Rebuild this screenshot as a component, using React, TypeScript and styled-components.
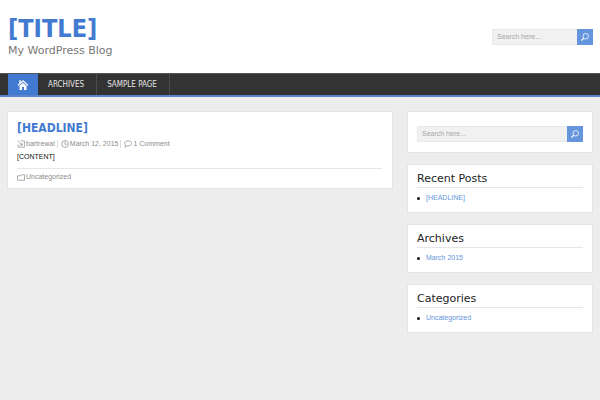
import React from "react";
import styled, { createGlobalStyle, css } from "styled-components";

const GlobalStyle = createGlobalStyle`
  * { box-sizing: border-box; }
  body {
    margin: 0;
    background: #ededed;
    color: #111;
    font: 7px/12px "Liberation Sans", Arial, sans-serif;
  }
  h1, h2, p, ul { margin: 0; padding: 0; font-weight: normal; }
  a { color: inherit; text-decoration: none; }
`;

const Header = styled.header`
  display: flex;
  align-items: center;
  justify-content: space-between;
  height: 73px;
  padding: 0 7px 0 8px;
  background: #fff;
`;

const Brand = styled.div`
  display: flex;
  flex-direction: column;
`;

const SiteTitle = styled.h1`
  && { font-weight: bold; }
  color: #437ad1;
  font-family: "DejaVu Sans Condensed", "DejaVu Sans", sans-serif;
  font-stretch: condensed;
  font-size: 25px;
  line-height: 28px;
`;

const Tagline = styled.p`
  color: #777;
  font-family: "DejaVu Sans", sans-serif;
  font-size: 11px;
  line-height: 16px;
`;

const SearchForm = styled.form<{ $compact?: boolean }>`
  display: flex;
  height: 16px;
  ${(p) => p.$compact && css`width: 101px;`}
`;

const SearchInput = styled.input`
  flex: 1;
  min-width: 0;
  border: 1px solid #e9e9e9;
  border-right: 0;
  border-radius: 0;
  padding: 0 4px;
  background: #f1f1f1;
  color: #555;
  font: inherit;
  outline: 0;
  &::placeholder { color: #a6a6a6; opacity: 1; }
`;

const SearchButton = styled.button`
  display: flex;
  align-items: center;
  justify-content: center;
  width: 16px;
  border: 0;
  padding: 0;
  background: #6495dd;
  color: #fff;
  cursor: pointer;
`;

const Nav = styled.nav`
  display: flex;
  height: 24px;
  padding: 0 8px;
  border-top: 1px solid #555;
  border-bottom: 2px solid #5a82c4;
  background: #333;
`;

const NavLink = styled.a<{ $home?: boolean }>`
  display: flex;
  align-items: center;
  padding: 0 12px 0 10px;
  border-right: 1px solid #4c4c4c;
  color: #e6e6e6;
  font-family: "DejaVu Sans Condensed", "DejaVu Sans", sans-serif;
  font-stretch: condensed;
  font-size: 8px;
  ${(p) => p.$home && css`
    justify-content: center;
    width: 30px;
    padding: 0;
    border: 0;
    background: #437ad1;
    color: #fff;
  `}
`;

const Content = styled.div`
  display: grid;
  grid-template-columns: minmax(0, 386fr) minmax(0, 186fr);
  gap: 14px;
  align-items: start;
  padding: 14px 7px;
`;

const Card = styled.section`
  border: 1px solid #e4e4e4;
  padding: 9px;
  background: #fff;
`;

const PostCard = styled(Card).attrs({ as: "article" })`
  padding: 8px 10px 4px 9px;
`;

const PostTitle = styled.h2`
  && { font-weight: bold; }
  color: #437ad1;
  font-family: "DejaVu Sans Condensed", "DejaVu Sans", sans-serif;
  font-stretch: condensed;
  font-size: 12px;
  line-height: 17px;
`;

const Meta = styled.div`
  display: flex;
  height: 14px;
  align-items: center;
  color: #8c8c8c;
`;

const MetaItem = styled.span`
  display: flex;
  align-items: center;
  gap: 1px;
  line-height: 8px;
  & + & {
    margin-left: 2px;
    padding-left: 3px;
    border-left: 1px solid #ddd;
  }
`;

const PostFooter = styled.footer`
  margin-top: 5px;
  padding-top: 1px;
  border-top: 1px solid #e6e6e6;
`;

const Sidebar = styled.aside`
  display: flex;
  flex-direction: column;
  gap: 11px;
`;

const SearchCard = styled(Card)`
  padding: 14px 9px 10px;
`;

const Widget = styled(Card)`
  padding: 5px 9px 8px;
`;

const WidgetTitle = styled.h2`
  border-bottom: 1px solid #e6e6e6;
  color: #222;
  font-family: "DejaVu Sans", sans-serif;
  font-size: 11px;
  line-height: 17px;
`;

const WidgetList = styled.ul`
  padding-top: 4px;
  list-style: none;
`;

const WidgetItem = styled.li`
  display: flex;
  align-items: center;
  gap: 6px;
  color: #6495dd;
  &::before {
    content: "";
    width: 3px;
    height: 3px;
    border-radius: 50%;
    background: #111;
  }
`;

const Icon = styled.svg`
  display: block;
  flex: none;
  fill: none;
  stroke: currentColor;
`;

const SearchIcon = () => (
  <Icon width="8" height="8" viewBox="0 0 16 16" strokeWidth="1.6" aria-hidden="true">
    <circle cx="9.5" cy="6.5" r="5.5" />
    <path d="M5.6 10.4 1 15" strokeWidth="2.2" />
  </Icon>
);

const HomeIcon = () => (
  <Icon width="12" height="12" viewBox="0 0 24 24" aria-hidden="true">
    <path d="M2 13 12 3.5 22 13" strokeWidth="2.4" />
    <path d="M4.5 2.5h3v4l-3 3z" fill="currentColor" stroke="none" />
    <path d="M12 7.5 5 14v8h5v-6h4v6h5v-8z" fill="currentColor" stroke="none" />
  </Icon>
);

const AuthorIcon = () => (
  <Icon width="8" height="8" viewBox="0 0 14 14" strokeWidth="1.2" aria-hidden="true">
    <path d="M6 1.5h7v11H2V8M1 1l8 8M9 4.5V9H4.5" />
  </Icon>
);

const ClockIcon = () => (
  <Icon width="8" height="8" viewBox="0 0 14 14" strokeWidth="1.3" aria-hidden="true">
    <circle cx="7" cy="7" r="6" />
    <path d="M7 3v4.5h3.5" />
  </Icon>
);

const CommentIcon = () => (
  <Icon width="8" height="8" viewBox="0 0 14 14" strokeWidth="1.3" aria-hidden="true">
    <path d="M7.2 1.5c3.4 0 6 1.8 6 4.4s-2.6 4.4-6 4.4c-.7 0-1.4-.1-2-.2L2 13l.7-3.9C1.7 8.3 1 7.2 1 5.9c0-2.600 2.800-4.400 6.200-4.400z" />
  </Icon>
);

const FolderIcon = () => (
  <Icon width="8" height="7" viewBox="0 0 16 14" strokeWidth="1.4" aria-hidden="true">
    <path d="M1 12.500v-9h7l1.500-2H15v11z" />
  </Icon>
);

const Search = ({ id, compact }: { id: string; compact?: boolean }) => (
  <SearchForm $compact={compact} role="search" onSubmit={(e) => e.preventDefault()}>
    <SearchInput id={id} type="text" aria-label="Search" placeholder="Search here..." />
    <SearchButton type="submit" aria-label="Submit search">
      <SearchIcon />
    </SearchButton>
  </SearchForm>
);

const widgets = [
  { title: "Recent Posts", link: "[HEADLINE]" },
  { title: "Archives", link: "March 2015" },
  { title: "Categories", link: "Uncategorized" },
];

export default function App() {
  return (
    <>
      <GlobalStyle />
      <Header>
        <Brand>
          <SiteTitle><a href="#home">[TITLE]</a></SiteTitle>
          <Tagline>My WordPress Blog</Tagline>
        </Brand>
        <Search id="header-search" compact />
      </Header>
      <Nav>
        <NavLink $home href="#home" aria-label="Home"><HomeIcon /></NavLink>
        <NavLink href="#archives">ARCHIVES</NavLink>
        <NavLink href="#sample">SAMPLE PAGE</NavLink>
      </Nav>
      <Content>
        <PostCard>
          <PostTitle><a href="#post">[HEADLINE]</a></PostTitle>
          <Meta>
            <MetaItem><AuthorIcon /><a href="#author">bartrewal</a></MetaItem>
            <MetaItem><ClockIcon /><a href="#date">March 12, 2015</a></MetaItem>
            <MetaItem><CommentIcon /><a href="#comments">1 Comment</a></MetaItem>
          </Meta>
          <p>[CONTENT]</p>
          <PostFooter>
            <Meta>
              <MetaItem><FolderIcon /><a href="#category">Uncategorized</a></MetaItem>
            </Meta>
          </PostFooter>
        </PostCard>
        <Sidebar>
          <SearchCard><Search id="sidebar-search" /></SearchCard>
          {widgets.map((w) => (
            <Widget key={w.title}>
              <WidgetTitle>{w.title}</WidgetTitle>
              <WidgetList>
                <WidgetItem><a href="#item">{w.link}</a></WidgetItem>
              </WidgetList>
            </Widget>
          ))}
        </Sidebar>
      </Content>
    </>
  );
}
